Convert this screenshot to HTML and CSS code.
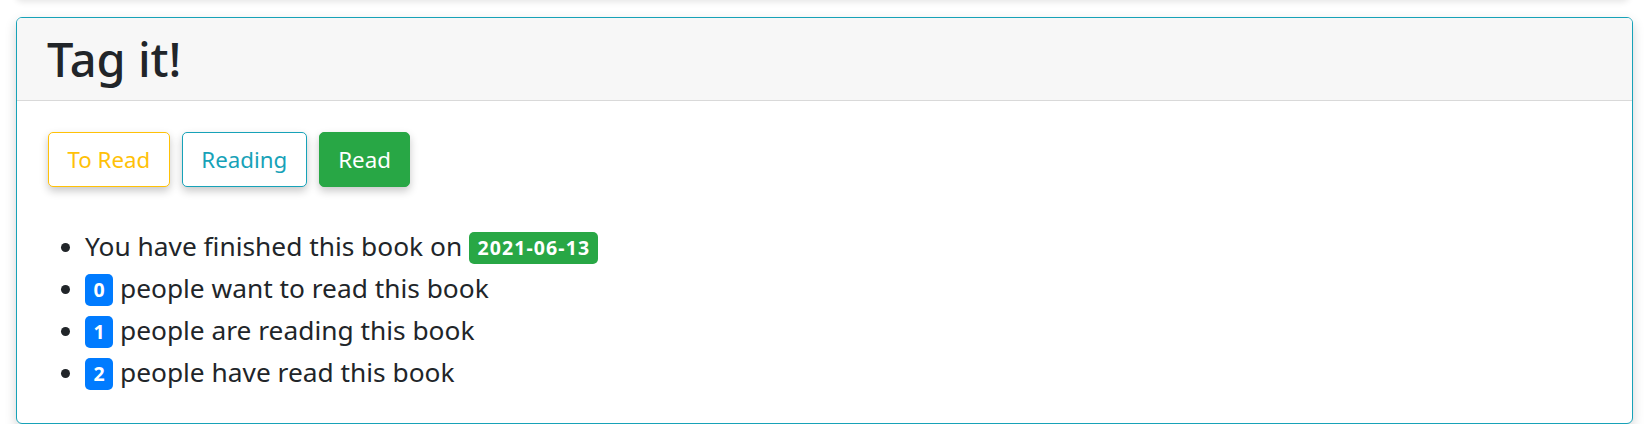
FILE: index.html
```html
<!DOCTYPE html>
<html lang="en">
<head>
<meta charset="utf-8">
<title>Tag it!</title>
<link rel="stylesheet" href="styles.css">
</head>
<body>
<div class="page">
  <div class="prev-card"></div>
  <section class="card">
    <header class="card-header">
      <h1 class="card-title">Tag it!</h1>
    </header>
    <div class="card-body">
      <div class="btn-row">
        <button class="btn btn-outline-warning">To Read</button>
        <button class="btn btn-outline-info">Reading</button>
        <button class="btn btn-success">Read</button>
      </div>
      <ul class="stats">
        <li>You have finished this book on <span class="badge badge-success">2021-06-13</span></li>
        <li><span class="badge badge-primary">0</span> people want to read this book</li>
        <li><span class="badge badge-primary">1</span> people are reading this book</li>
        <li><span class="badge badge-primary">2</span> people have read this book</li>
      </ul>
    </div>
  </section>
</div>
</body>
</html>
```
FILE: styles.css
```css
* { box-sizing: border-box; }
html, body { margin: 0; padding: 0; background: #fff; }
body {
  font-family: "Noto Sans", "Open Sans", sans-serif;
  color: #212529;
  overflow: hidden;
}
.page {
  padding: 0 15px 0 16px;
}
.prev-card {
  height: 20px;
  margin-top: -20px;
  margin-bottom: 17px;
  background: #fff;
  border-radius: 6px;
  box-shadow: 0 2px 6px rgba(0, 0, 0, 0.10);
  margin-right: 4px;
}
.card {
  border: 1px solid #17a2b8;
  border-radius: 6px;
  background: #fff;
  box-shadow: 0 5px 12px rgba(0, 0, 0, 0.17);
  overflow: hidden;
}
.card-header {
  background: #f7f7f7;
  border-bottom: 1px solid #d9d9d9;
  padding: 1px 30px 0;
  height: 83px;
}
.card-title {
  margin: 0;
  font-size: 47px;
  font-weight: 500;
  line-height: 81px;
  color: #212529;
}
.card-body {
  padding: 31px 31px 30px;
}
.btn-row {
  display: flex;
  gap: 12px;
}
.btn {
  font-family: inherit;
  font-size: 22.3px;
  line-height: 53px;
  height: 55px;
  padding: 0 18.5px;
  border: 1px solid transparent;
  border-radius: 5px;
  background: #fff;
  box-shadow: 0 4px 9px rgba(0, 0, 0, 0.22);
  cursor: pointer;
}
.btn-outline-warning { color: #ffc107; border-color: #ffc107; }
.btn-outline-info { color: #17a2b8; border-color: #17a2b8; }
.btn-success { color: #fff; background: #28a745; border-color: #28a745; }
.stats {
  margin: 38px 0 0;
  padding-left: 37px;
  font-size: 26.3px;
  line-height: 42px;
}
.stats li::marker { font-size: 24px; }
.badge {
  display: inline-block;
  font-size: 19.5px;
  font-weight: 700;
  line-height: 1;
  letter-spacing: 1.1px;
  padding: 6px 7.4px 6px 8.5px;
  border-radius: 5px;
  color: #fff;
  vertical-align: 1px;
}
.badge-success { background: #28a745; }
.badge-primary { background: #007bff; }
```
